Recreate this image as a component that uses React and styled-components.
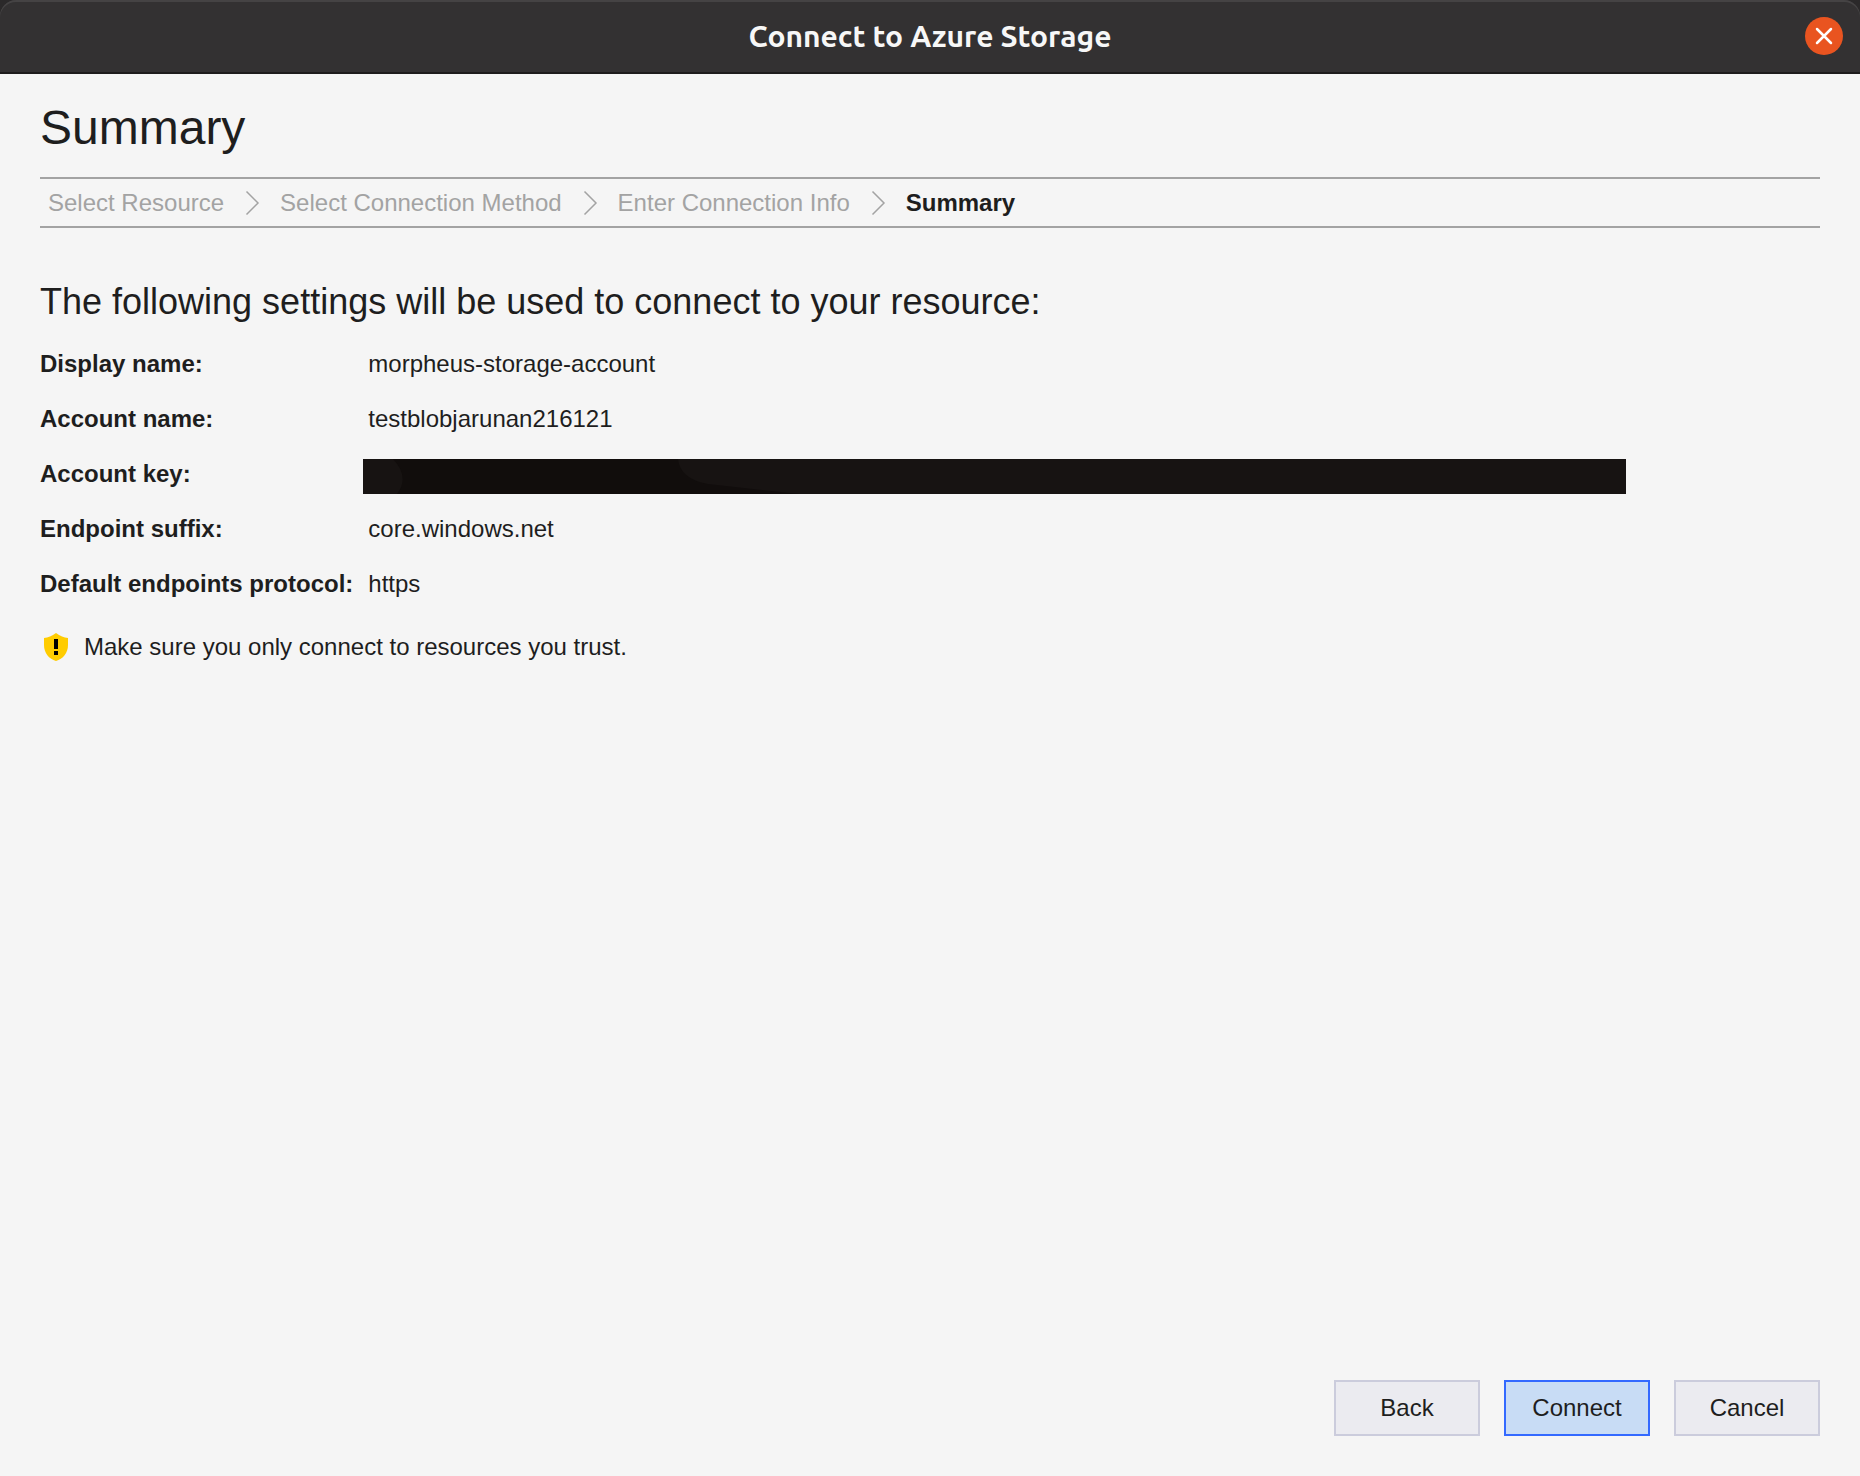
import React from "react";
import styled, { createGlobalStyle } from "styled-components";

const GlobalStyle = createGlobalStyle`
  *, *::before, *::after { box-sizing: border-box; }
  body {
    margin: 0;
    background: #2b292a;
    color: #1e1e1e;
    font-family: "Liberation Sans", Arial, sans-serif;
    font-size: 24px;
    line-height: 28px;
  }
`;

const Window = styled.div`
  display: flex;
  flex-direction: column;
  min-height: 100vh;
`;

const TitleBar = styled.header`
  display: grid;
  grid-template-columns: 1fr auto 1fr;
  align-items: center;
  height: 74px;
  padding: 0 17px;
  background: #333132;
  border-bottom: 2px solid #1e1c1d;
  border-radius: 16px 16px 0 0;
  box-shadow: inset 0 2px #454344;
`;

const WindowTitle = styled.div`
  grid-column: 2;
  color: #f7f7f7;
  font-family: Ubuntu, "Noto Sans", sans-serif;
  font-size: 30px;
  font-weight: 700;
  line-height: 36px;
`;

const CloseButton = styled.button`
  display: grid;
  justify-self: end;
  place-items: center;
  width: 38px;
  height: 38px;
  padding: 0;
  border: 0;
  border-radius: 50%;
  background: #e95420;
`;

const Content = styled.main`
  display: flex;
  flex: 1;
  flex-direction: column;
  padding: 26px 40px 40px;
  background: #f5f5f5;
`;

const PageTitle = styled.h1`
  margin: 0 0 21px;
  font-size: 48px;
  font-weight: 400;
  line-height: 56px;
`;

const Steps = styled.ol`
  display: flex;
  align-items: center;
  gap: 20px;
  height: 51px;
  margin: 0 0 52px;
  padding: 0 8px;
  border: solid #a3a3a3;
  border-width: 2px 0;
  list-style: none;
`;

const Step = styled.li`
  display: flex;
  align-items: center;
  gap: 20px;
  color: ${(p) => (p.$current ? "#1e1e1e" : "#a3a3a3")};
  font-weight: ${(p) => (p.$current ? 700 : 400)};
`;

const SectionTitle = styled.h2`
  margin: 0 0 26px;
  font-size: 36px;
  font-weight: 400;
  line-height: 44px;
`;

const Settings = styled.dl`
  display: grid;
  grid-template-columns: max-content 1fr;
  column-gap: 15px;
  row-gap: 27px;
  margin: 0 0 33px;
`;

const Label = styled.dt`
  font-weight: 700;
`;

const Value = styled.dd`
  display: flex;
  margin: 0;
`;

const Redaction = styled.svg`
  display: block;
  flex: 0 1 1263px;
  min-width: 0;
  height: 35px;
  margin: -1px 0 -6px -5px;
`;

const Notice = styled.p`
  display: flex;
  align-items: center;
  gap: 12px;
  margin: 0;
`;

const Actions = styled.footer`
  display: flex;
  justify-content: flex-end;
  gap: 24px;
  margin-top: auto;
`;

const Button = styled.button`
  width: 146px;
  height: 56px;
  padding: 0;
  border: 2px solid ${(p) => (p.$primary ? "#3369ff" : "#cbccdc")};
  border-radius: 0;
  background: ${(p) => (p.$primary ? "#c8dcf5" : "#ebebf0")};
  color: #1e1e1e;
  font: inherit;
`;

const steps = [
  "Select Resource",
  "Select Connection Method",
  "Enter Connection Info",
  "Summary",
];

function Chevron() {
  return (
    <svg width="16" height="28" viewBox="0 0 16 28" fill="none" aria-hidden="true">
      <path d="M2.500 2.500 L14 14 L2.500 25.500" stroke="#a3a3a3" strokeWidth="1.5" />
    </svg>
  );
}

function HiddenKey() {
  return (
    <Redaction viewBox="0 0 1263 35" preserveAspectRatio="none" role="img" aria-label="Hidden">
      <rect width="1263" height="35" fill="#171312" />
      <path d="M30 0 Q47 18 34 35 H436 L345 25 Q317 20 315 0 Z" fill="#110d0c" />
    </Redaction>
  );
}

function ShieldIcon() {
  return (
    <svg width="32" height="32" viewBox="0 0 32 32" aria-hidden="true">
      <path d="M16 2 C20 5 24 6.500 28 7 V14 C28 22 23 28 16 30 C9 28 4 22 4 14 V7 C8 6.500 12 5 16 2 Z" fill="#fc0" />
      <path d="M14 8 H18 V18 H14 Z M14 20 H18 V24 H14 Z" fill="#000" />
    </svg>
  );
}

const settings = [
  ["Display name:", "morpheus-storage-account"],
  ["Account name:", "testblobjarunan216121"],
  ["Account key:", <HiddenKey key="hidden" />],
  ["Endpoint suffix:", "core.windows.net"],
  ["Default endpoints protocol:", "https"],
];

export default function App() {
  return (
    <Window>
      <GlobalStyle />
      <TitleBar>
        <WindowTitle>Connect to Azure Storage</WindowTitle>
        <CloseButton type="button" aria-label="Close">
          <svg width="18" height="18" viewBox="0 0 18 18" aria-hidden="true">
            <path d="M2 2 L16 16 M16 2 L2 16" stroke="#fff" strokeWidth="2.500" strokeLinecap="round" />
          </svg>
        </CloseButton>
      </TitleBar>
      <Content>
        <PageTitle>Summary</PageTitle>
        <Steps>
          {steps.map((name, i) => {
            const last = i === steps.length - 1;
            return (
              <Step key={name} $current={last} aria-current={last ? "step" : undefined}>
                {name}
                {!last && <Chevron />}
              </Step>
            );
          })}
        </Steps>
        <SectionTitle>The following settings will be used to connect to your resource:</SectionTitle>
        <Settings>
          {settings.map(([label, value]) => (
            <React.Fragment key={label}>
              <Label>{label}</Label>
              <Value>{value}</Value>
            </React.Fragment>
          ))}
        </Settings>
        <Notice>
          <ShieldIcon />
          Make sure you only connect to resources you trust.
        </Notice>
        <Actions>
          <Button type="button">Back</Button>
          <Button type="button" $primary>Connect</Button>
          <Button type="button">Cancel</Button>
        </Actions>
      </Content>
    </Window>
  );
}
